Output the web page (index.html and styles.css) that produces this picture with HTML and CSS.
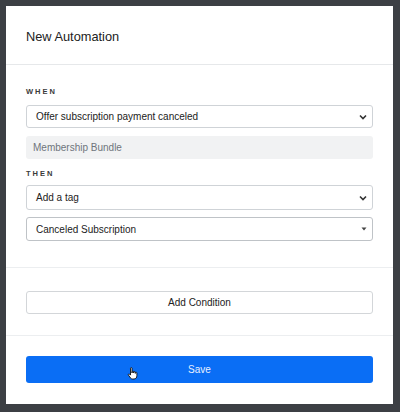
FILE: index.html
```html
<!DOCTYPE html>
<html>
<head>
<meta charset="utf-8">
<link rel="stylesheet" href="styles.css">
</head>
<body>
<div class="panel">
  <div class="header"><span class="title">New Automation</span></div>
  <div class="section main">
    <div class="label">WHEN</div>
    <div class="select s1"><span>Offer subscription payment canceled</span>
      <svg class="chev" width="8" height="6" viewBox="0 0 8 6"><path d="M1 1.5 L4 4.5 L7 1.5" fill="none" stroke="#333" stroke-width="1.6"/></svg>
    </div>
    <div class="readonly">Membership Bundle</div>
    <div class="label then">THEN</div>
    <div class="select s2"><span>Add a tag</span>
      <svg class="chev" width="8" height="6" viewBox="0 0 8 6"><path d="M1 1.5 L4 4.5 L7 1.5" fill="none" stroke="#333" stroke-width="1.6"/></svg>
    </div>
    <div class="select s3"><span>Canceled Subscription</span>
      <svg class="tri" width="6" height="4" viewBox="0 0 6 4"><path d="M0.5 0.5 L5.5 0.5 L3 3.5 Z" fill="#444"/></svg>
    </div>
  </div>
  <div class="section cond">
    <div class="btn-outline">Add Condition</div>
  </div>
  <div class="section foot">
    <div class="btn-primary">Save
      <svg class="cursor" width="12" height="13" viewBox="0 0 12 13"><path d="M3.5 1.2 C3.5 0.4 5 0.4 5 1.2 L5 6 L5.2 4.6 C5.4 3.9 6.6 4 6.6 4.8 L6.7 6 L6.9 5 C7.1 4.3 8.3 4.4 8.3 5.2 L8.3 6.4 L8.5 5.7 C8.8 5 9.9 5.2 9.9 6 L9.9 8.6 C9.9 10.6 8.8 12 7 12 L5.6 12 C4.6 12 4 11.6 3.4 10.8 L1.4 8 C0.9 7.3 1.8 6.5 2.5 7.1 L3.5 8.1 Z" fill="#fff" stroke="#111" stroke-width="0.9" stroke-linejoin="round"/></svg>
    </div>
  </div>
</div>
</body>
</html>
```
FILE: styles.css
```css
html, body { margin: 0; padding: 0; }
body {
  background: #3c3f44;
  width: 400px;
  height: 412px;
  font-family: "Liberation Sans", Arial, sans-serif;
  color: #212529;
  padding: 6px 0 0 6px;
  box-sizing: border-box;
}
.panel {
  width: 387px;
  height: 398px;
  background: #fff;
  display: flex;
  flex-direction: column;
}
.header {
  height: 59px;
  border-bottom: 1px solid #e6e8ea;
  display: flex;
  align-items: center;
  padding-left: 20px;
  padding-top: 2px;
  box-sizing: border-box;
}
.title { font-size: 12.8px; color: #222; }
.section { padding: 0 20px; }
.main {
  padding-top: 22px;
  padding-bottom: 26px;
  border-bottom: 1px solid #eceef0;
  display: flex;
  flex-direction: column;
}
.label {
  font-size: 7.5px;
  font-weight: bold;
  letter-spacing: 2px;
  color: #3a3a3a;
  height: 10px;
  line-height: 10px;
  margin-bottom: 8px;
}
.label.then { margin-top: 10px; margin-bottom: 6px; }
.select {
  border: 1px solid #cfd3d7;
  border-radius: 3px;
  height: 23px;
  box-sizing: border-box;
  display: flex;
  align-items: center;
  justify-content: space-between;
  padding: 0 5px 0 9px;
  font-size: 10px;
  color: #222;
}
.s1 { height: 23px; }
.s2 { height: 25px; }
.s3 { height: 24px; margin-top: 7px; border-color: #bfc3c7; }
.readonly {
  margin-top: 8px;
  height: 23px;
  background: #f1f2f3;
  border-radius: 3px;
  display: flex;
  align-items: center;
  padding-left: 7px;
  font-size: 10px;
  color: #6f757c;
}
.cond {
  padding-top: 23px;
  padding-bottom: 21px;
  border-bottom: 1px solid #eceef0;
}
.btn-outline {
  height: 23px;
  border: 1px solid #d3d6d9;
  border-radius: 3px;
  box-sizing: border-box;
  display: flex;
  align-items: center;
  justify-content: center;
  font-size: 10px;
  color: #222;
}
.foot { padding-top: 20px; }
.btn-primary {
  position: relative;
  height: 27px;
  background: #0a6ef5;
  border-radius: 3px;
  display: flex;
  align-items: center;
  justify-content: center;
  font-size: 10px;
  color: #e8f0ff;
}
.cursor { position: absolute; left: 101px; top: 11px; }
```
